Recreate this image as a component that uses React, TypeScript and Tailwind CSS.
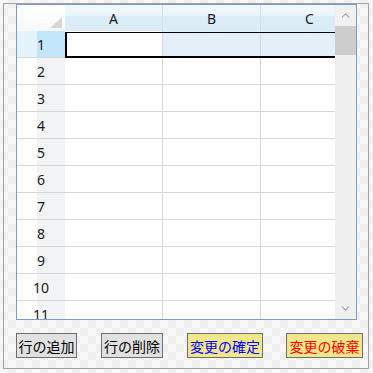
import { ChevronUp, ChevronDown } from "lucide-react";

const rows = [1, 2, 3, 4, 5, 6, 7, 8, 9, 10, 11];
const cols = ["A", "B", "C"];

function HeaderRow() {
  return (
    <div className="flex h-[26px] shrink-0 bg-[linear-gradient(#f3f9fd_0%,#eaf4fb_42%,#dcecf6_43%,#dcecf6_100%)]">
      <div className="relative w-[48px] shrink-0 bg-[linear-gradient(#ffffff,#f6f8fa)]">
        <svg className="absolute left-[33px] top-[12px]" width="12" height="11" viewBox="0 0 12 11">
          <polygon points="12,0 12,11 0,11" fill="#d6d6d6" />
        </svg>
      </div>
      {cols.map((c) => (
        <div
          key={c}
          className="flex w-[98px] shrink-0 items-center justify-center border-r border-[#d5e0ea] text-[14px] text-[#1a1a1a]"
        >
          {c}
        </div>
      ))}
    </div>
  );
}

function Row({ n }: { n: number }) {
  const sel = n === 1;
  return (
    <div className="relative flex h-[27px] shrink-0 border-b border-[#d7d7d7]">
      <div className="flex w-[48px] shrink-0">
        <div className={sel ? "w-[20px] bg-[#e4f3fc]" : "w-[20px] bg-white"} />
        <div className={sel ? "w-[28px] bg-[#c3e6fa]" : "w-[28px] bg-[#f2f3f5]"} />
        <span className="absolute left-0 top-0 flex h-[26px] w-[48px] items-center justify-center text-[14px] text-[#1a1a1a]">
          {n}
        </span>
      </div>
      {cols.map((c, i) => (
        <div
          key={c}
          className={
            "w-[98px] shrink-0 border-r border-[#d7d7d7] " +
            (sel && i > 0 ? "bg-[#e3f0fa]" : "bg-white")
          }
        />
      ))}
      {sel && (
        <div className="absolute bottom-[-1px] left-[48px] right-0 top-[1px] border-b-2 border-l-2 border-t border-black" />
      )}
    </div>
  );
}

export default function App() {
  return (
    <div className="h-[373px] w-[373px] bg-[image:repeating-conic-gradient(#efefef_0_25%,#f8f8f8_0_50%)] bg-[length:16px_16px] p-[3px] font-['Noto_Sans','Noto_Sans_CJK_JP',sans-serif]">
      <div className="flex h-[366px] w-[366px] flex-col border border-[#a0a0a0] pl-[12px]">
        <div className="flex h-[316px] w-[341px] shrink-0 overflow-hidden border border-[#7a9cc6] bg-white">
          <div className="flex w-[318px] shrink-0 flex-col overflow-hidden">
            <HeaderRow />
            {rows.map((n) => (
              <Row key={n} n={n} />
            ))}
          </div>
          <div className="flex w-[21px] shrink-0 flex-col bg-[#f0f0f0]">
            <div className="flex h-[21px] items-center justify-center text-[#a3a3a3]">
              <ChevronUp size={13} strokeWidth={2} />
            </div>
            <div className="h-[29px] bg-[#cdcdcd]" />
            <div className="flex-1" />
            <div className="flex h-[21px] items-center justify-center text-[#a3a3a3]">
              <ChevronDown size={13} strokeWidth={2} />
            </div>
          </div>
        </div>
        <div className="mt-[13px] flex h-[25px] font-['Noto_Sans_CJK_JP',sans-serif] text-[14px] leading-none">
          <button className="flex w-[61px] items-center justify-center border border-[#6e6e6e] bg-[#e1e1e1] text-black">
            行の追加
          </button>
          <button className="ml-[24px] flex w-[62px] items-center justify-center border border-[#6e6e6e] bg-[#e1e1e1] text-black">
            行の削除
          </button>
          <button className="ml-[24px] flex w-[76px] items-center justify-center border border-[#6e6e6e] bg-[#f0e68c] text-[#0000ff]">
            変更の確定
          </button>
          <button className="ml-[23px] flex w-[77px] items-center justify-center border border-[#6e6e6e] bg-[#f0e68c] text-[#ff0000]">
            変更の破棄
          </button>
        </div>
      </div>
    </div>
  );
}
